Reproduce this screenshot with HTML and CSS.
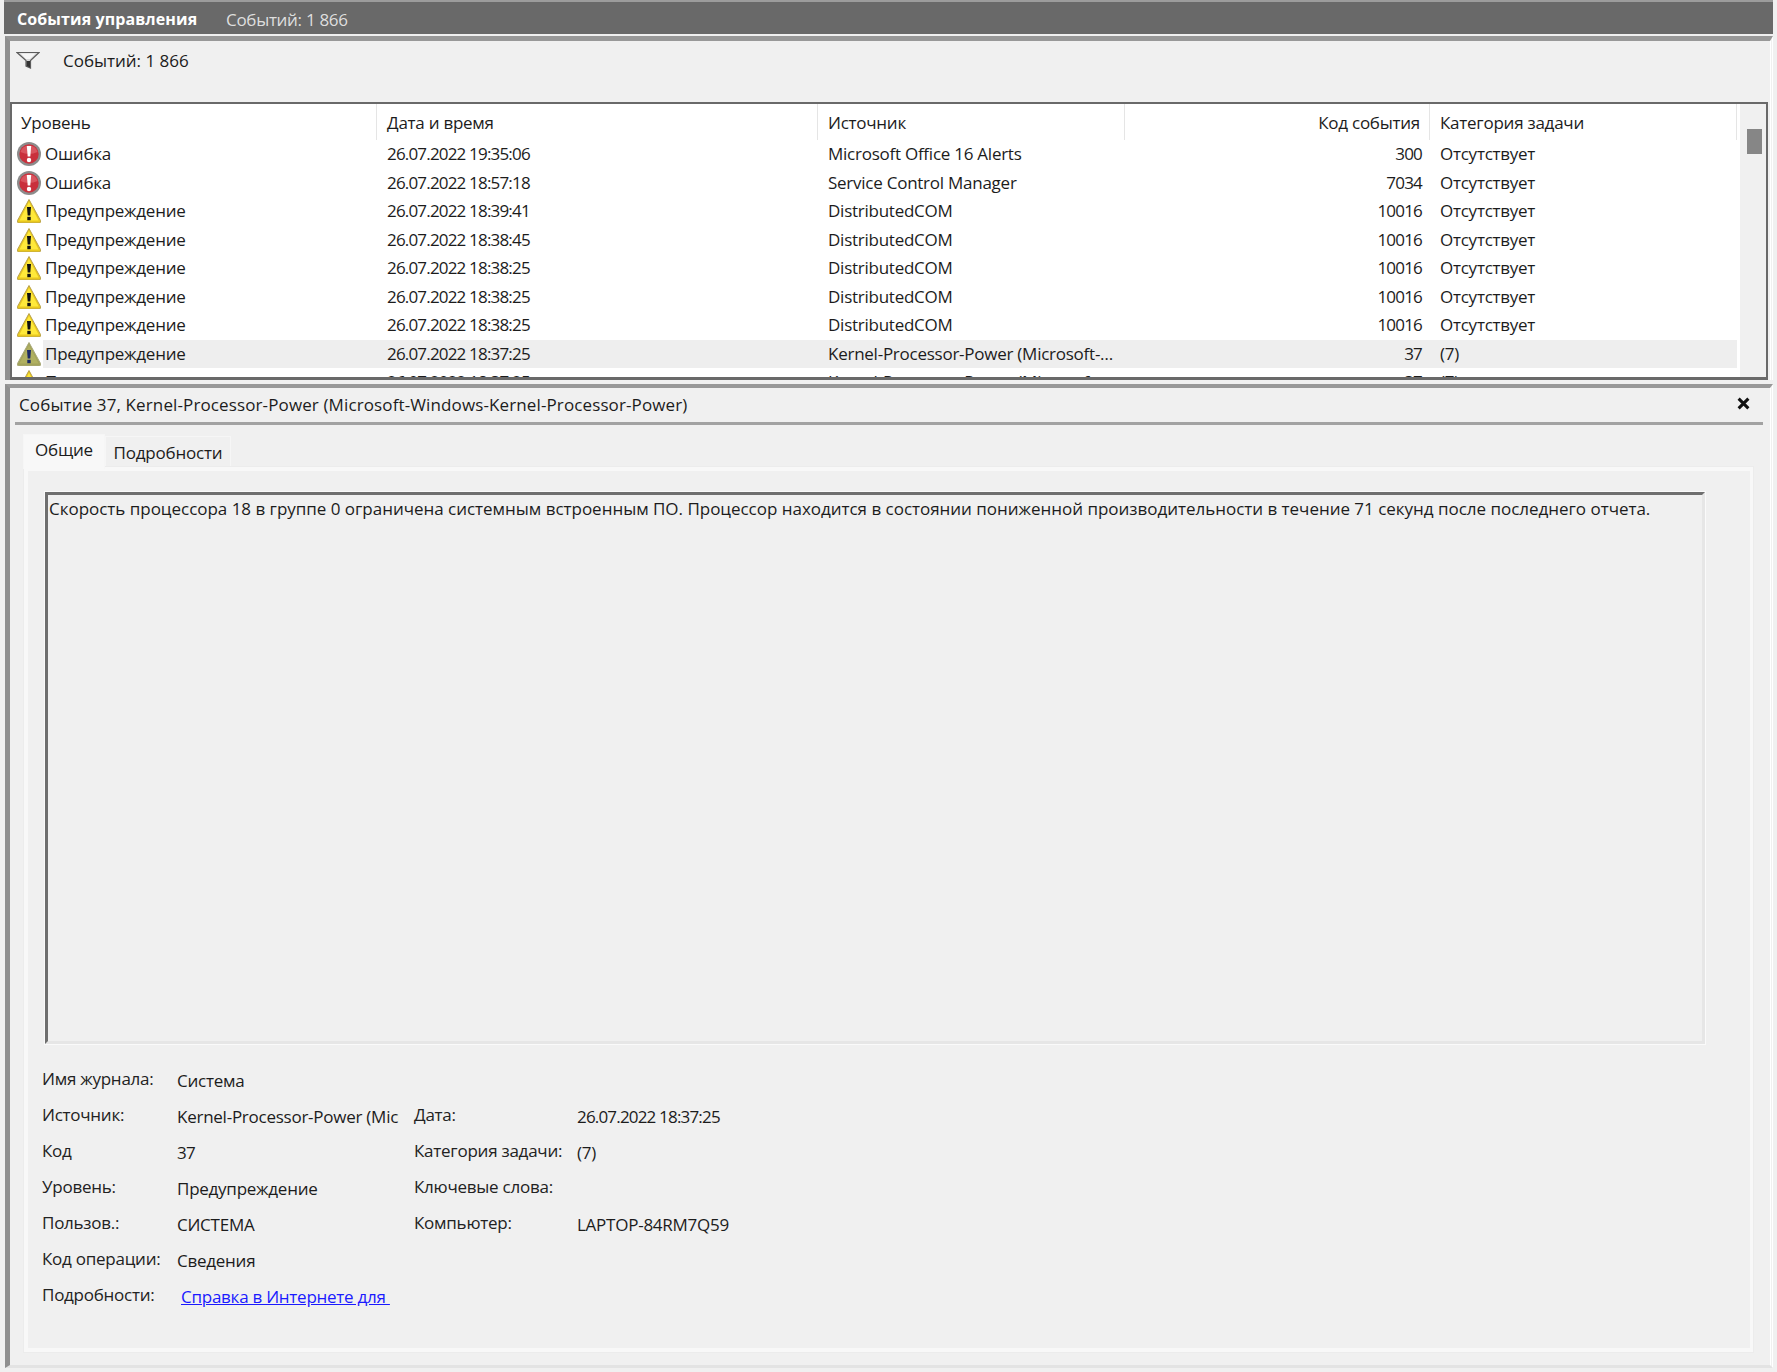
FILE: index.html
```html
<!DOCTYPE html>
<html lang="ru"><head>
<meta charset="utf-8">
<title>События управления</title>
<link rel="stylesheet" href="styles.css">
</head>
<body>

<svg class="defs" width="0" height="0">
  <symbol id="iconError" viewBox="0 0 24 24">
    <circle cx="12" cy="12" r="12" fill="#8c8c8c"/>
    <circle cx="12" cy="12" r="9.700" fill="#c9303c"/>
    <path d="M3.500 10a8.800 8.800 0 0 1 17 0a20 20 0 0 1-17 0z" fill="#d9555f"/>
    <path d="M9.800 4h4.400l-.9 10.500h-2.600z" fill="#fff"/>
    <circle cx="12" cy="18" r="2.200" fill="#fff"/>
  </symbol>
  <symbol id="iconWarn" viewBox="0 0 24 24">
    <path d="M12 .5 L23.500 21.500 Q24 24 22 24 H2 Q0 24 .5 21.500z" fill="#e9c81e" stroke="#b9a24a" stroke-width="1"/>
    <path d="M12 3 L2.500 21.500 H21.500z" fill="#ffe93a"/>
    <path d="M10 8h4l-.7 8.500h-2.600z" fill="#111"/>
    <rect x="10.300" y="17.800" width="3.400" height="3.400" fill="#111"/>
  </symbol>
  <symbol id="iconWarnSel" viewBox="0 0 24 24">
    <path d="M12 .5 L23.500 21.500 Q24 24 22 24 H2 Q0 24 .5 21.500z" fill="#a3a35a" stroke="#a8a878" stroke-width="1"/>
    <path d="M12 3 L2.500 21.500 H21.500z" fill="#b0b060"/>
    <path d="M10 8h4l-.7 8.500h-2.600z" fill="#1b2a66"/>
    <rect x="10.300" y="17.800" width="3.400" height="3.400" fill="#1b2a66"/>
  </symbol>
</svg>

<header class="titlebar">
  <span class="title-main">События управления</span>
  <span class="title-count">Событий: 1 866</span>
</header>

<section class="panel top-panel">
  <div class="filter-bar">
    <svg class="filter-icon" viewBox="0 0 24 18">
      <path d="M1 1.500h22L14.500 9.500V17l-4.500-2V9.500z" fill="#d8d8d8" stroke="#5c5c5c" stroke-width="1.200"/>
      <path d="M4.500 2.500h15l-5.500 5.500h-4z" fill="#f6f6f6"/>
      <path d="M10.500 10h3.500v6.500l-3.500-1.500z" fill="#333"/>
    </svg>
    <span>Событий: 1 866</span>
  </div>

  <div class="table-frame">
    <div class="table">
      <div class="row head">
        <div class="cell">Уровень</div>
        <div class="cell">Дата и время</div>
        <div class="cell">Источник</div>
        <div class="cell num">Код события</div>
        <div class="cell">Категория задачи</div>
      </div>
      <div class="row">
        <div class="cell level"><svg class="icon"><use href="#iconError"/></svg><span>Ошибка</span></div>
        <div class="cell time">26.07.2022 19:35:06</div>
        <div class="cell">Microsoft Office 16 Alerts</div>
        <div class="cell num">300</div>
        <div class="cell">Отсутствует</div>
      </div>
      <div class="row">
        <div class="cell level"><svg class="icon"><use href="#iconError"/></svg><span>Ошибка</span></div>
        <div class="cell time">26.07.2022 18:57:18</div>
        <div class="cell">Service Control Manager</div>
        <div class="cell num">7034</div>
        <div class="cell">Отсутствует</div>
      </div>
      <div class="row">
        <div class="cell level"><svg class="icon"><use href="#iconWarn"/></svg><span>Предупреждение</span></div>
        <div class="cell time">26.07.2022 18:39:41</div>
        <div class="cell">DistributedCOM</div>
        <div class="cell num">10016</div>
        <div class="cell">Отсутствует</div>
      </div>
      <div class="row">
        <div class="cell level"><svg class="icon"><use href="#iconWarn"/></svg><span>Предупреждение</span></div>
        <div class="cell time">26.07.2022 18:38:45</div>
        <div class="cell">DistributedCOM</div>
        <div class="cell num">10016</div>
        <div class="cell">Отсутствует</div>
      </div>
      <div class="row">
        <div class="cell level"><svg class="icon"><use href="#iconWarn"/></svg><span>Предупреждение</span></div>
        <div class="cell time">26.07.2022 18:38:25</div>
        <div class="cell">DistributedCOM</div>
        <div class="cell num">10016</div>
        <div class="cell">Отсутствует</div>
      </div>
      <div class="row">
        <div class="cell level"><svg class="icon"><use href="#iconWarn"/></svg><span>Предупреждение</span></div>
        <div class="cell time">26.07.2022 18:38:25</div>
        <div class="cell">DistributedCOM</div>
        <div class="cell num">10016</div>
        <div class="cell">Отсутствует</div>
      </div>
      <div class="row">
        <div class="cell level"><svg class="icon"><use href="#iconWarn"/></svg><span>Предупреждение</span></div>
        <div class="cell time">26.07.2022 18:38:25</div>
        <div class="cell">DistributedCOM</div>
        <div class="cell num">10016</div>
        <div class="cell">Отсутствует</div>
      </div>
      <div class="row selected">
        <div class="cell level"><svg class="icon"><use href="#iconWarnSel"/></svg><span>Предупреждение</span></div>
        <div class="cell time">26.07.2022 18:37:25</div>
        <div class="cell"><span class="clip">Kernel-Processor-Power (Microsoft-Windows-Kernel-Processor-Power)</span></div>
        <div class="cell num">37</div>
        <div class="cell">(7)</div>
      </div>
      <div class="row">
        <div class="cell level"><svg class="icon"><use href="#iconWarn"/></svg><span>Предупреждение</span></div>
        <div class="cell time">26.07.2022 18:37:25</div>
        <div class="cell"><span class="clip">Kernel-Processor-Power (Microsoft-Windows-Kernel-Processor-Power)</span></div>
        <div class="cell num">37</div>
        <div class="cell">(7)</div>
      </div>
    </div>
    <div class="scrollbar"><div class="thumb"></div></div>
  </div>
</section>

<section class="panel bottom-panel">
  <div class="detail-head">
    <span>Событие 37, Kernel-Processor-Power (Microsoft-Windows-Kernel-Processor-Power)</span>
    <svg class="close" viewBox="0 0 12 12"><path d="M1.500 1.500l9 9M10.500 1.500l-9 9" stroke="#111" stroke-width="2.800" fill="none"/></svg>
  </div>

  <div class="tabs">
    <div class="tab active">Общие</div>
    <div class="tab second">Подробности</div>
  </div>

  <div class="tab-page">
    <div class="message">Скорость процессора 18 в группе 0 ограничена системным встроенным ПО. Процессор находится в состоянии пониженной производительности в течение 71 секунд после последнего отчета.</div>

    <div class="fields">
      <div class="label">Имя журнала:</div><div class="value">Система</div><div class="label"></div><div class="value"></div>
      <div class="label">Источник:</div><div class="value">Kernel-Processor-Power (Microsoft-Windows)</div><div class="label">Дата:</div><div class="value time">26.07.2022 18:37:25</div>
      <div class="label">Код</div><div class="value time">37</div><div class="label">Категория задачи:</div><div class="value">(7)</div>
      <div class="label">Уровень:</div><div class="value">Предупреждение</div><div class="label">Ключевые слова:</div><div class="value"></div>
      <div class="label">Пользов.:</div><div class="value">СИСТЕМА</div><div class="label">Компьютер:</div><div class="value">LAPTOP-84RM7Q59</div>
      <div class="label">Код операции:</div><div class="value">Сведения</div><div class="label"></div><div class="value"></div>
      <div class="label">Подробности:</div><div class="value"><a class="link" href="#">Справка в Интернете для&nbsp;</a></div><div class="label"></div><div class="value"></div>
    </div>
  </div>
</section>

</body>
</html>
```

FILE: styles.css
```css
/* Page */
html, body {
  margin: 0;
  height: 1372px;
  overflow: hidden;
}
body {
  background-color: #f0f0f0;
  color: #1c1c1c;
  font-family: "Open Sans", "Noto Sans", sans-serif;
  font-size: 17px;
  letter-spacing: -0.02px;
}
.defs {
  display: block;
  height: 0;
}

/* Dark title strip */
.titlebar {
  height: 30px;
  margin: 0 4px 0 4px;
  border-top: 2px solid #9c9c9c;
  background-color: #696969;
  display: flex;
  align-items: center;
  padding: 2px 0 0 13px;
  color: #dedede;
}
.title-main {
  width: 209px;
  color: #fff;
  font-size: 16px;
  font-weight: 700;
  letter-spacing: 0.1px;
}
.title-count {
  letter-spacing: -0.3px;
}

/* Panels with the sunken grey edge */
.panel {
  margin: 2px 4px 0 5px;
  border-left: 5px solid #8f8f8f;
  border-top: 5px solid #989898;
  border-right: 3px double #fff;
}
.top-panel {
  height: 339px;
}
.bottom-panel {
  margin-top: 4px;
  height: 977px;
  border-top-width: 4px;
  border-bottom: 3px solid #e3e3e3;
}

/* Filter strip */
.filter-bar {
  height: 61px;
  display: flex;
  align-items: flex-start;
  padding: 8px 0 0 6px;
  box-sizing: border-box;
}
.filter-icon {
  width: 24px;
  height: 18px;
  margin: 2px 23px 0 0;
}

/* Event table */
.table-frame {
  height: 278px;
  margin-right: 2px;
  box-sizing: border-box;
  border: 2px solid #696969;
  border-bottom-width: 3px;
  background-color: #fff;
  display: flex;
  overflow: hidden;
}
.table {
  flex: 1;
  overflow: hidden;
  letter-spacing: -0.25px;
}
.row {
  display: grid;
  grid-template-columns: 365px 441px 307px 305px 307px;
  height: 28.5px;
  line-height: 28.5px;
  white-space: nowrap;
}
.row.head {
  height: 36px;
  line-height: 37px;
}
.row.head .cell {
  border-right: 1px solid #e5e5e5;
  padding-left: 10px;
}
.row.head .cell:first-child {
  padding-left: 9px;
}
.row.head .num {
  padding-left: 0;
  padding-right: 9px;
  letter-spacing: -0.25px;
}
.cell {
  padding-left: 10px;
  overflow: hidden;
  box-sizing: border-box;
}
.cell.num {
  text-align: right;
  padding-right: 8px;
  padding-left: 0;
  letter-spacing: -0.8px;
}
.time {
  letter-spacing: -0.82px;
}
.clip {
  display: block;
  width: 286px;
  overflow: hidden;
  text-overflow: ellipsis;
}
.cell.level {
  display: flex;
  align-items: center;
  padding-left: 5px;
}
.icon {
  width: 24px;
  height: 24px;
  flex: none;
  margin-right: 4px;
}
.selected .cell {
  background-color: #eeeeee;
}
.selected .cell.level {
  background: linear-gradient(to right, #fff 31px, #eeeeee 31px);
}

/* Scrollbar */
.scrollbar {
  width: 26px;
  margin-left: 3px;
  background-color: #f0f0f0;
}
.thumb {
  width: 15px;
  height: 25px;
  margin: 25px 0 0 7px;
  background-color: #868686;
}

/* Details pane */
.detail-head {
  height: 34px;
  margin: 0 7px 0 5px;
  border-bottom: 3px solid #a2a2a2;
  display: flex;
  align-items: center;
  justify-content: space-between;
  padding: 0 0 0 4px;
  letter-spacing: 0.12px;
}
.detail-head span {
  margin-bottom: 2px;
}
.close {
  width: 13px;
  height: 13px;
  margin: 0 13px 4px 0;
}

/* Tabs */
.tabs {
  display: flex;
  align-items: flex-end;
  height: 41px;
  margin-left: 13px;
}
.tab {
  height: 30px;
  line-height: 32px;
  width: 126px;
  text-align: center;
  box-sizing: border-box;
  background-color: #f0f0f0;
  border: solid #f6f6f6;
  border-width: 1px 1px 0 1px;
  letter-spacing: -0.2px;
}
.tab.active {
  width: 82px;
  height: 35px;
  line-height: 30px;
  background-color: #f8f8f8;
  margin-bottom: -3px;
  position: relative;
  z-index: 1;
}

.tab-page {
  height: 887px;
  margin: 0 16px 0 13px;
  box-sizing: border-box;
  border: 5px solid #f8f8f8;
  border-right-width: 4px;
  outline: 1px solid #ececec;
  outline-offset: -1px;
  padding: 21px 45px 0 17px;
}
.message {
  height: 552px;
  box-sizing: border-box;
  border: 3px solid #e6e6e6;
  border-top-color: #6f6f6f;
  border-left-color: #6f6f6f;
  outline: 1px solid #fafafa;
  padding: 2px 0 0 1px;
  line-height: 24px;
  margin-bottom: 19px;
}

/* Property grid */
.fields {
  display: grid;
  grid-template-columns: 135px 237px 163px 1fr;
  grid-auto-rows: 36px;
  margin-left: -3px;
  white-space: nowrap;
  letter-spacing: -0.25px;
}
.label {
  line-height: 32px;
  color: #222;
}
.value {
  line-height: 36px;
  overflow: hidden;
  margin-right: 15px;
}
.value.time {
  letter-spacing: -0.82px;
}
.link {
  color: #1a1aff;
  margin-left: 4px;
  line-height: 32px;
}
```
